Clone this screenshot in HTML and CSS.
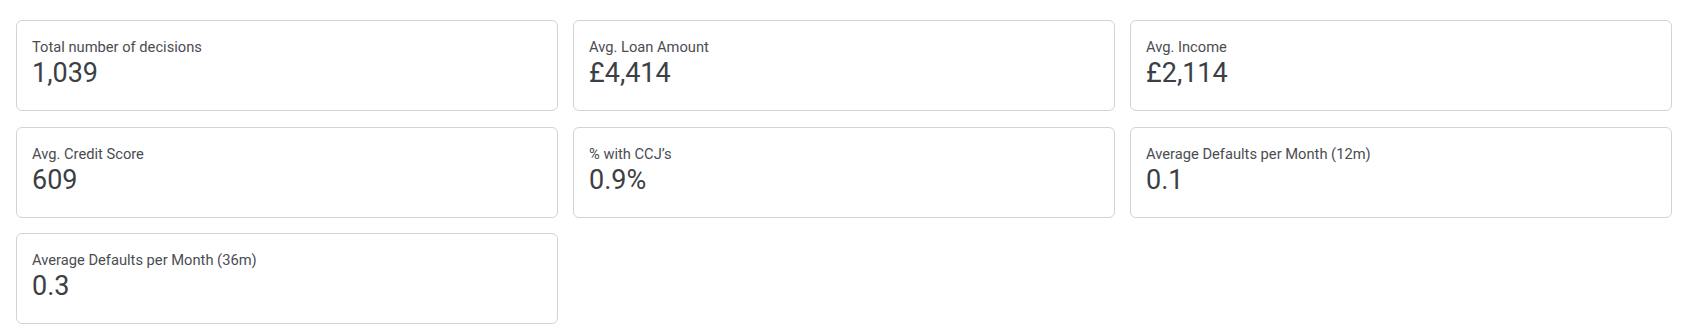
FILE: index.html
```html
<!DOCTYPE html>
<html lang="en">
<head>
<meta charset="utf-8">
<title>Decisions summary</title>
<link rel="stylesheet" href="styles.css">
</head>
<body>
<div class="stats">
  <div class="card"><div class="label">Total number of decisions</div><div class="value">1,039</div></div>
  <div class="card"><div class="label">Avg. Loan Amount</div><div class="value">£4,414</div></div>
  <div class="card"><div class="label">Avg. Income</div><div class="value">£2,114</div></div>
  <div class="card"><div class="label">Avg. Credit Score</div><div class="value">609</div></div>
  <div class="card"><div class="label">% with CCJ’s</div><div class="value">0.9%</div></div>
  <div class="card"><div class="label">Average Defaults per Month (12m)</div><div class="value">0.1</div></div>
  <div class="card"><div class="label">Average Defaults per Month (36m)</div><div class="value">0.3</div></div>
</div>
</body>
</html>
```

FILE: styles.css
```css
html, body {
  margin: 0;
  padding: 0;
  background: #ffffff;
}
body {
  font-family: Roboto, "Liberation Sans", sans-serif;
  color: #3f4246;
}
.stats {
  display: grid;
  grid-template-columns: repeat(3, 542px);
  column-gap: 15px;
  row-gap: 15.5px;
  padding: 20px 0 0 16px;
}
.card {
  box-sizing: border-box;
  height: 91px;
  border: 1px solid #d3d3d6;
  border-radius: 6px;
  padding: 17px 15px 0 15px;
}
.label {
  font-size: 14.7px;
  line-height: 18px;
  color: #4a4d52;
}
.value {
  font-size: 27px;
  line-height: 34px;
  color: #3c3f44;
}
```
